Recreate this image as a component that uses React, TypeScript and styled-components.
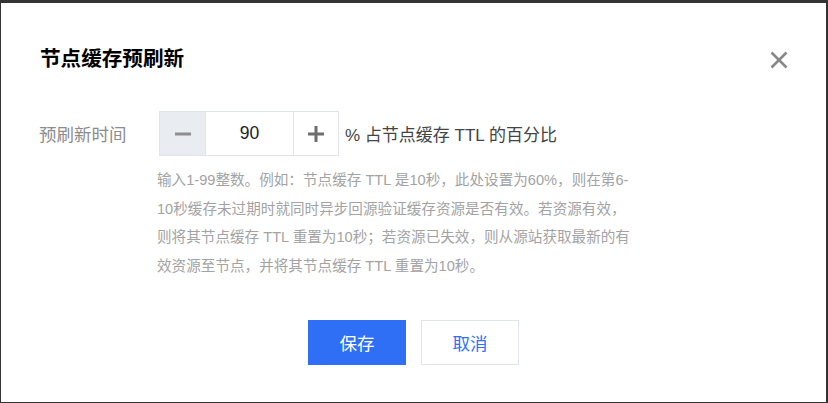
import styled, { createGlobalStyle } from "styled-components";

const GlobalStyle = createGlobalStyle`
  html, body {
    margin: 0;
    padding: 0;
    background: #343434;
  }
  body {
    font-family: "Liberation Sans", "Noto Sans CJK SC", sans-serif;
  }
`;

const Dialog = styled.div`
  box-sizing: border-box;
  display: flex;
  flex-direction: column;
  margin: 3px 2px 0 1px;
  height: 399px;
  background: #fff;
  padding: 0 38px 37px 38px;
`;

const Header = styled.div`
  display: flex;
  align-items: center;
  justify-content: space-between;
  padding-top: 42px;
`;

const Title = styled.h2`
  margin: 0 0 0 1px;
  font-size: 20.6px;
  line-height: 28px;
  font-weight: 700;
  color: #000;
`;

const CloseButton = styled.button`
  display: flex;
  align-items: center;
  justify-content: center;
  width: 18px;
  height: 22px;
  padding: 0;
  margin: 2px 0 0 0;
  border: none;
  background: transparent;
  cursor: pointer;
`;

const FormRow = styled.div`
  display: flex;
  align-items: center;
  margin-top: 38px;
`;

const Label = styled.label`
  width: 120px;
  flex-shrink: 0;
  font-size: 17.5px;
  color: #8c8c8c;
`;

const Stepper = styled.div`
  box-sizing: border-box;
  display: flex;
  height: 45px;
  border: 1px solid #e1e4ea;
`;

const StepButton = styled.button<{ $disabled?: boolean }>`
  display: flex;
  align-items: center;
  justify-content: center;
  width: 45px;
  padding: 0;
  border: none;
  background: ${(p) => (p.$disabled ? "#e9ecf1" : "#fff")};
  color: ${(p) => (p.$disabled ? "#8e8e8e" : "#6e6e6e")};
  cursor: pointer;

  &:last-child {
    width: 44px;
  }
`;

const NumberInput = styled.input`
  box-sizing: border-box;
  width: 89px;
  border: none;
  border-left: 1px solid #e1e4ea;
  border-right: 1px solid #e1e4ea;
  outline: none;
  text-align: center;
  font-family: inherit;
  font-size: 17.5px;
  color: #222;
`;

const Unit = styled.span`
  margin-left: 6px;
  font-size: 17px;
  color: #444;
`;

const Hint = styled.p`
  margin: 10px 0 0 118px;
  font-size: 14.6px;
  line-height: 28.7px;
  color: #a3a3a3;
`;

const Footer = styled.div`
  display: flex;
  justify-content: center;
  gap: 15px;
  margin-top: auto;
`;

const Button = styled.button<{ $primary?: boolean }>`
  box-sizing: border-box;
  width: 98px;
  height: 45px;
  font-family: inherit;
  font-size: 17.5px;
  border: 1px solid ${(p) => (p.$primary ? "#2f6ff6" : "#e1e4ea")};
  background: ${(p) => (p.$primary ? "#2f6ff6" : "#fff")};
  color: ${(p) => (p.$primary ? "#fff" : "#2f6ff6")};
  cursor: pointer;
`;

function Bar({ plus }: { plus?: boolean }) {
  return (
    <svg width="16" height="16" viewBox="0 0 16 16">
      <rect x="0" y="6.5" width="16" height="3" fill="currentColor" />
      {plus && <rect x="6.5" y="0" width="3" height="16" fill="currentColor" />}
    </svg>
  );
}

export default function App() {
  return (
    <>
      <GlobalStyle />
      <Dialog>
        <Header>
          <Title>节点缓存预刷新</Title>
          <CloseButton aria-label="关闭">
            <svg width="18" height="18" viewBox="0 0 18 18">
              <path
                d="M1.5 1.5 L16.5 16.5 M16.5 1.5 L1.5 16.5"
                stroke="#888"
                strokeWidth="2.6"
                fill="none"
              />
            </svg>
          </CloseButton>
        </Header>
        <FormRow>
          <Label>预刷新时间</Label>
          <Stepper>
            <StepButton $disabled aria-label="减少">
              <Bar />
            </StepButton>
            <NumberInput defaultValue="90" />
            <StepButton aria-label="增加">
              <Bar plus />
            </StepButton>
          </Stepper>
          <Unit>% 占节点缓存 TTL 的百分比</Unit>
        </FormRow>
        <Hint>
          输入1-99整数。例如：节点缓存 TTL 是10秒，此处设置为60%，则在第6-
          <br />
          10秒缓存未过期时就同时异步回源验证缓存资源是否有效。若资源有效，
          <br />
          则将其节点缓存 TTL 重置为10秒；若资源已失效，则从源站获取最新的有
          <br />
          效资源至节点，并将其节点缓存 TTL 重置为10秒。
        </Hint>
        <Footer>
          <Button $primary>保存</Button>
          <Button>取消</Button>
        </Footer>
      </Dialog>
    </>
  );
}
